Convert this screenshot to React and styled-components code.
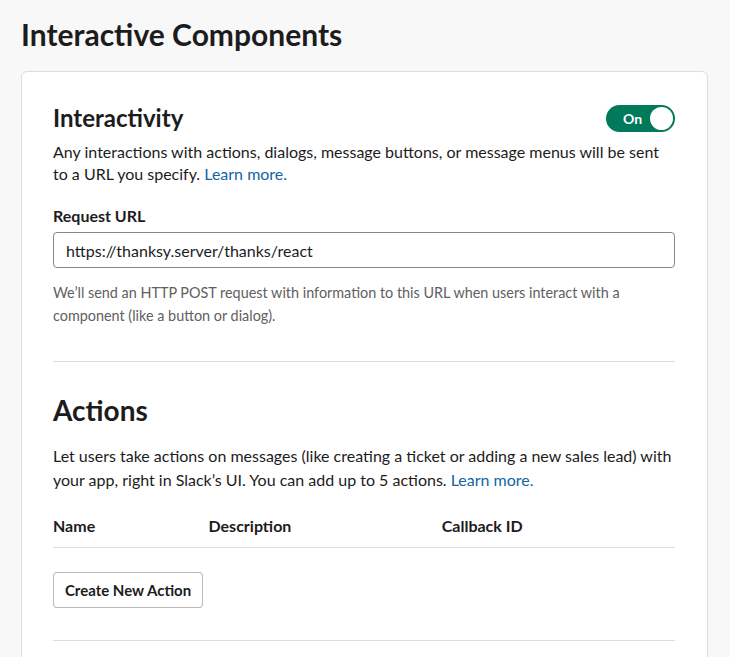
import React from "react";
import styled, { createGlobalStyle } from "styled-components";

const Global = createGlobalStyle`
  html, body { margin: 0; padding: 0; background: #f8f8f8; }
  body {
    font-family: Lato, "Noto Sans", "Liberation Sans", sans-serif;
    color: #1d1c1d;
    -webkit-font-smoothing: antialiased;
  }
`;

const Page = styled.div`
  padding: 14px 22px 0 21px;
  height: 657px;
  box-sizing: border-box;
  overflow: hidden;
`;

const Title = styled.h1`
  margin: 0 0 17px;
  font-size: 30px;
  line-height: 40px;
  font-weight: 700;
  color: #1d1c1d;
`;

const Card = styled.section`
  background: #fff;
  border: 1px solid #dddddd;
  border-radius: 6px;
  padding: 30px 32px 40px 31px;
  width: 687px;
  box-sizing: border-box;
`;

const HeaderRow = styled.div`
  display: flex;
  align-items: center;
  justify-content: space-between;
  margin-bottom: 7px;
`;

const SectionTitle = styled.h2`
  margin: 0;
  font-weight: 700;
  font-size: ${(p) => (p.$large ? "28px" : "24px")};
  line-height: ${(p) => (p.$large ? "36px" : "32px")};
  color: #1d1c1d;
`;

const Toggle = styled.button`
  display: flex;
  align-items: center;
  justify-content: space-between;
  width: 69px;
  height: 27px;
  box-sizing: border-box;
  padding: 0 2px 0 17px;
  border: none;
  border-radius: 14px;
  background: #007a5a;
  color: #fff;
  font-family: inherit;
  font-weight: 700;
  font-size: 14px;
  cursor: pointer;
`;

const Knob = styled.span`
  width: 23px;
  height: 23px;
  border-radius: 50%;
  background: #fff;
`;

const Paragraph = styled.p`
  margin: ${(p) => p.$m || "0"};
  font-size: 16px;
  line-height: ${(p) => p.$lh || "22px"};
  color: #1d1c1d;
`;

const Link = styled.a`
  color: #1264a3;
  text-decoration: none;
`;

const Label = styled.label`
  display: block;
  margin: 20px 0 5px;
  font-size: 16px;
  line-height: 22px;
  font-weight: 700;
`;

const Input = styled.input`
  display: block;
  width: 100%;
  height: 36px;
  box-sizing: border-box;
  padding: 0 12px;
  border: 1px solid #868686;
  border-radius: 4px;
  font-family: inherit;
  font-size: 16px;
  color: #1d1c1d;
  outline: none;
`;

const Help = styled.p`
  margin: 13px 0 0;
  font-size: 14.4px;
  line-height: 23.4px;
  color: #616061;
`;

const Divider = styled.hr`
  border: none;
  border-top: 1px solid #dddddd;
  margin: ${(p) => p.$m || "0"};
`;

const Table = styled.div`
  margin-top: 22px;
`;

const HeadRow = styled.div`
  display: grid;
  grid-template-columns: 25% 37.5% 37.5%;
  padding-bottom: 10px;
  border-bottom: 1px solid #dddddd;
`;

const HeadCell = styled.div`
  font-size: 16px;
  line-height: 22px;
  font-weight: 700;
`;

const Button = styled.button`
  display: block;
  margin-top: 24px;
  height: 36px;
  width: 150px;
  padding: 0;
  box-sizing: border-box;
  background: #fff;
  border: 1px solid rgba(29, 28, 29, 0.3);
  border-radius: 4px;
  font-family: inherit;
  font-size: 15px;
  font-weight: 700;
  color: #1d1c1d;
  cursor: pointer;
`;

export default function App() {
  return (
    <>
      <Global />
      <Page>
        <Title>Interactive Components</Title>
        <Card>
          <HeaderRow>
            <SectionTitle>Interactivity</SectionTitle>
            <Toggle type="button" aria-pressed="true">
              On
              <Knob />
            </Toggle>
          </HeaderRow>
          <Paragraph>
            Any interactions with actions, dialogs, message buttons, or message menus will be sent
            to a URL you specify. <Link href="#">Learn more.</Link>
          </Paragraph>
          <Label htmlFor="req-url">Request URL</Label>
          <Input id="req-url" defaultValue="https://thanksy.server/thanks/react" />
          <Help>
            We’ll send an HTTP POST request with information to this URL when users interact with a
            component (like a button or dialog).
          </Help>
          <Divider $m="33px 0 30px" />
          <SectionTitle $large>Actions</SectionTitle>
          <Paragraph $lh="24.4px" $m="16px 0 0">
            Let users take actions on messages (like creating a ticket or adding a new sales lead) with
            your app, right in Slack’s UI. You can add up to 5 actions. <Link href="#">Learn more.</Link>
          </Paragraph>
          <Table>
            <HeadRow>
              <HeadCell>Name</HeadCell>
              <HeadCell>Description</HeadCell>
              <HeadCell>Callback ID</HeadCell>
            </HeadRow>
          </Table>
          <Button type="button">Create New Action</Button>
          <Divider $m="32px 0 0" />
        </Card>
      </Page>
    </>
  );
}
